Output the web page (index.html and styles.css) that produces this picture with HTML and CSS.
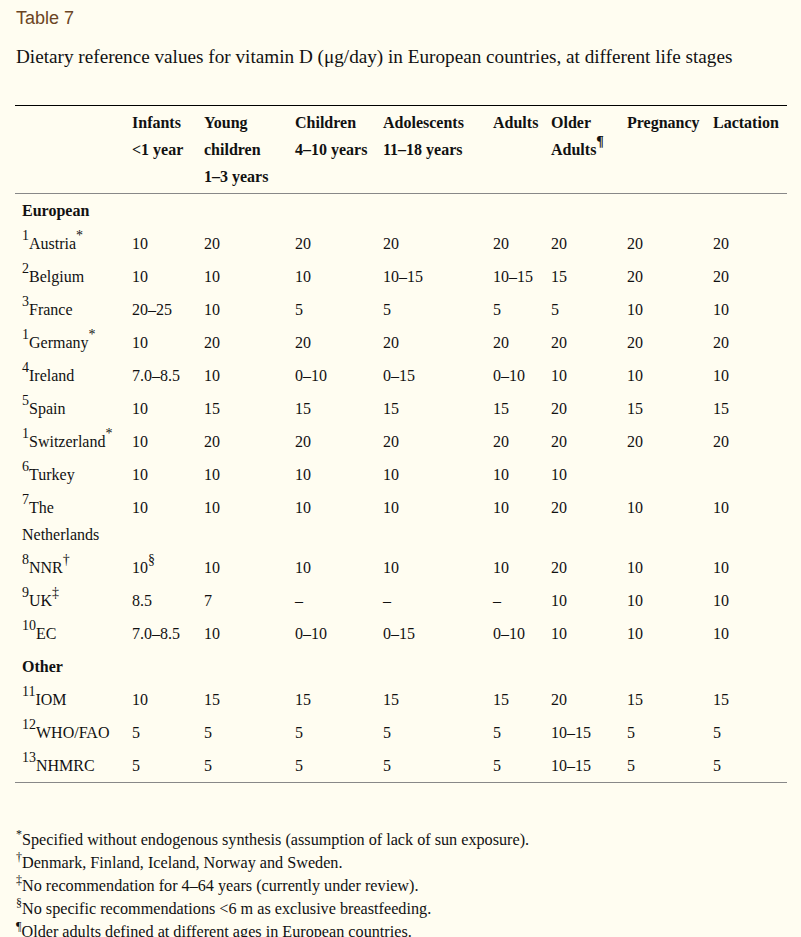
FILE: index.html
```html
<!DOCTYPE html>
<html>
<head>
<meta charset="utf-8">
<link rel="stylesheet" href="styles.css">
</head>
<body>
<div class="page">
  <div class="label">Table 7</div>
  <div class="caption">Dietary reference values for vitamin D (μg/day) in European countries, at different life stages</div>
  <table class="data">
    <colgroup>
      <col class="c0"><col class="c1"><col class="c2"><col class="c3"><col class="c4"><col class="c5"><col class="c6"><col class="c7"><col class="c8">
    </colgroup>
    <thead>
      <tr>
        <th></th>
        <th>Infants<br>&lt;1 year</th>
        <th>Young<br>children<br>1–3 years</th>
        <th>Children<br>4–10 years</th>
        <th>Adolescents<br>11–18 years</th>
        <th>Adults</th>
        <th>Older<br>Adults<sup>¶</sup></th>
        <th>Pregnancy</th>
        <th>Lactation</th>
      </tr>
    </thead>
    <tbody>
      <tr><td class="group" colspan="9">European</td></tr>
      <tr><td><sup>1</sup>Austria<sup>*</sup></td><td>10</td><td>20</td><td>20</td><td>20</td><td>20</td><td>20</td><td>20</td><td>20</td></tr>
      <tr><td><sup>2</sup>Belgium</td><td>10</td><td>10</td><td>10</td><td>10–15</td><td>10–15</td><td>15</td><td>20</td><td>20</td></tr>
      <tr><td><sup>3</sup>France</td><td>20–25</td><td>10</td><td>5</td><td>5</td><td>5</td><td>5</td><td>10</td><td>10</td></tr>
      <tr><td><sup>1</sup>Germany<sup>*</sup></td><td>10</td><td>20</td><td>20</td><td>20</td><td>20</td><td>20</td><td>20</td><td>20</td></tr>
      <tr><td><sup>4</sup>Ireland</td><td>7.0–8.5</td><td>10</td><td>0–10</td><td>0–15</td><td>0–10</td><td>10</td><td>10</td><td>10</td></tr>
      <tr><td><sup>5</sup>Spain</td><td>10</td><td>15</td><td>15</td><td>15</td><td>15</td><td>20</td><td>15</td><td>15</td></tr>
      <tr><td><sup>1</sup>Switzerland<sup>*</sup></td><td>10</td><td>20</td><td>20</td><td>20</td><td>20</td><td>20</td><td>20</td><td>20</td></tr>
      <tr><td><sup>6</sup>Turkey</td><td>10</td><td>10</td><td>10</td><td>10</td><td>10</td><td>10</td><td></td><td></td></tr>
      <tr><td><sup>7</sup>The Netherlands</td><td>10</td><td>10</td><td>10</td><td>10</td><td>10</td><td>20</td><td>10</td><td>10</td></tr>
      <tr><td><sup>8</sup>NNR<sup>†</sup></td><td>10<sup>§</sup></td><td>10</td><td>10</td><td>10</td><td>10</td><td>20</td><td>10</td><td>10</td></tr>
      <tr><td><sup>9</sup>UK<sup>‡</sup></td><td>8.5</td><td>7</td><td>–</td><td>–</td><td>–</td><td>10</td><td>10</td><td>10</td></tr>
      <tr><td><sup>10</sup>EC</td><td>7.0–8.5</td><td>10</td><td>0–10</td><td>0–15</td><td>0–10</td><td>10</td><td>10</td><td>10</td></tr>
      <tr><td class="group" colspan="9">Other</td></tr>
      <tr><td><sup>11</sup>IOM</td><td>10</td><td>15</td><td>15</td><td>15</td><td>15</td><td>20</td><td>15</td><td>15</td></tr>
      <tr><td><sup>12</sup>WHO/FAO</td><td>5</td><td>5</td><td>5</td><td>5</td><td>5</td><td>10–15</td><td>5</td><td>5</td></tr>
      <tr><td><sup>13</sup>NHMRC</td><td>5</td><td>5</td><td>5</td><td>5</td><td>5</td><td>10–15</td><td>5</td><td>5</td></tr>
    </tbody>
  </table>
  <div class="notes">
    <div class="note"><sup>*</sup>Specified without endogenous synthesis (assumption of lack of sun exposure).</div>
    <div class="note"><sup>†</sup>Denmark, Finland, Iceland, Norway and Sweden.</div>
    <div class="note"><sup>‡</sup>No recommendation for 4–64 years (currently under review).</div>
    <div class="note"><sup>§</sup>No specific recommendations &lt;6 m as exclusive breastfeeding.</div>
    <div class="note"><sup>¶</sup>Older adults defined at different ages in European countries.</div>
  </div>
</div>
</body>
</html>
```

FILE: styles.css
```css
html, body {
  margin: 0;
  padding: 0;
  background: #fffdf1;
}
body {
  font-family: "Liberation Serif", "Times New Roman", serif;
  color: #111;
  font-size: 16px;
}
.page {
  padding: 6px 14px 0 15px;
}
.label {
  font-family: "Liberation Sans", Arial, sans-serif;
  font-size: 18px;
  color: #6b4524;
  line-height: 24px;
  padding-left: 1px;
}
.caption {
  font-size: 19.2px;
  line-height: 24px;
  margin-top: 15px;
  padding-left: 1px;
}
.data {
  margin-top: 36px;
  border-collapse: collapse;
  table-layout: fixed;
  width: 772px;
  border-top: 1px solid #000;
  border-bottom: 1px solid #888;
}
.c0 { width: 110px; }
.c1 { width: 72px; }
.c2 { width: 91px; }
.c3 { width: 88px; }
.c4 { width: 110px; }
.c5 { width: 58px; }
.c6 { width: 76px; }
.c7 { width: 86px; }
.c8 { width: 81px; }
.data th, .data td {
  text-align: left;
  vertical-align: top;
  padding: 3px 0 3px 7px;
  line-height: 27px;
  font-size: 16px;
}
.data th {
  font-weight: bold;
}
.data thead tr {
  border-bottom: 1px solid #888;
}
.data td.group {
  font-weight: bold;
}
sup {
  font-size: 14px;
  line-height: 0;
  vertical-align: 9px;
}
.notes {
  margin-top: 46px;
  padding-left: 1px;
}
.note {
  font-size: 16.2px;
  line-height: 23px;
}
.note sup {
  font-size: 12px;
  vertical-align: 7px;
}
```
